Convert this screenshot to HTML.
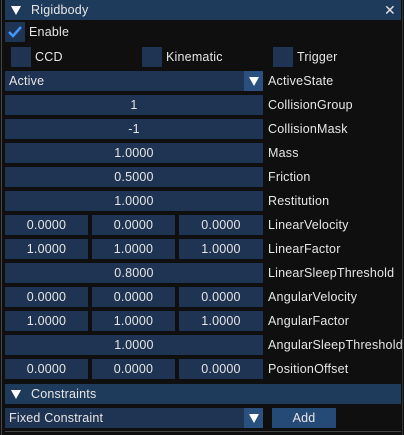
<!DOCTYPE html><html><head><style>
body{margin:0;width:404px;height:435px;background:#0f0f0f;position:relative;overflow:hidden;font-family:"Liberation Sans",sans-serif;font-size:12.5px;letter-spacing:0.2px;color:#e6e6e6}
div{position:absolute;box-sizing:border-box}
.f{background:#1f3352;height:20px;line-height:20px;text-align:center}
.l{left:268px;height:20px;line-height:20px;white-space:nowrap}
.cb{background:#1f3352;width:20px;height:20px}
.t{height:20px;line-height:20px;white-space:nowrap}
.tri{width:0;height:0;border-left:5px solid transparent;border-right:5px solid transparent;border-top:9px solid #fff}
</style></head><body>
<div style="left:1px;top:0;width:1px;height:435px;background:#444"></div>
<div style="left:402px;top:0;width:1px;height:435px;background:#333"></div>
<div style="left:5px;top:0;width:396px;height:20px;background:#1f3b5c"></div>
<div class="tri" style="left:11px;top:6px"></div>
<div class="t" style="left:31px;top:0">Rigidbody</div>
<div class="t" style="left:384px;top:0;font-size:14px">✕</div>
<div class="cb" style="left:5px;top:22px"><svg width="20" height="20"><path d="M4 10 L8 14 L16 5" stroke="#4296fa" stroke-width="2.5" fill="none"/></svg></div>
<div class="t" style="left:29px;top:22px">Enable</div>
<div class="cb" style="left:11px;top:47px"></div><div class="t" style="left:35px;top:47px">CCD</div>
<div class="cb" style="left:142px;top:47px"></div><div class="t" style="left:166px;top:47px">Kinematic</div>
<div class="cb" style="left:273px;top:47px"></div><div class="t" style="left:297px;top:47px">Trigger</div>
<div class="f" style="left:5px;top:71px;width:258px;text-align:left;padding-left:4px">Active</div>
<div style="left:244px;top:71px;width:19px;height:20px;background:#2a5080"></div>
<div class="tri" style="left:249px;top:77px"></div>
<div class="l" style="top:71px">ActiveState</div>
<div class="f" style="left:5px;top:95px;width:258px">1</div><div class="l" style="top:95px">CollisionGroup</div>
<div class="f" style="left:5px;top:119px;width:258px">-1</div><div class="l" style="top:119px">CollisionMask</div>
<div class="f" style="left:5px;top:143px;width:258px">1.0000</div><div class="l" style="top:143px">Mass</div>
<div class="f" style="left:5px;top:167px;width:258px">0.5000</div><div class="l" style="top:167px">Friction</div>
<div class="f" style="left:5px;top:191px;width:258px">1.0000</div><div class="l" style="top:191px">Restitution</div>
<div class="f" style="left:5px;top:215px;width:83px">0.0000</div><div class="f" style="left:92px;top:215px;width:83px">0.0000</div><div class="f" style="left:179px;top:215px;width:84px">0.0000</div><div class="l" style="top:215px">LinearVelocity</div>
<div class="f" style="left:5px;top:239px;width:83px">1.0000</div><div class="f" style="left:92px;top:239px;width:83px">1.0000</div><div class="f" style="left:179px;top:239px;width:84px">1.0000</div><div class="l" style="top:239px">LinearFactor</div>
<div class="f" style="left:5px;top:263px;width:258px">0.8000</div><div class="l" style="top:263px">LinearSleepThreshold</div>
<div class="f" style="left:5px;top:287px;width:83px">0.0000</div><div class="f" style="left:92px;top:287px;width:83px">0.0000</div><div class="f" style="left:179px;top:287px;width:84px">0.0000</div><div class="l" style="top:287px">AngularVelocity</div>
<div class="f" style="left:5px;top:311px;width:83px">1.0000</div><div class="f" style="left:92px;top:311px;width:83px">1.0000</div><div class="f" style="left:179px;top:311px;width:84px">1.0000</div><div class="l" style="top:311px">AngularFactor</div>
<div class="f" style="left:5px;top:335px;width:258px">1.0000</div><div class="l" style="top:335px">AngularSleepThreshold</div>
<div class="f" style="left:5px;top:359px;width:83px">0.0000</div><div class="f" style="left:92px;top:359px;width:83px">0.0000</div><div class="f" style="left:179px;top:359px;width:84px">0.0000</div><div class="l" style="top:359px">PositionOffset</div>
<div style="left:5px;top:384px;width:396px;height:20px;background:#1f3b5c"></div>
<div class="tri" style="left:11px;top:390px"></div>
<div class="t" style="left:31px;top:384px">Constraints</div>
<div class="f" style="left:5px;top:408px;width:258px;text-align:left;padding-left:4px">Fixed Constraint</div>
<div style="left:244px;top:408px;width:19px;height:20px;background:#2a5080"></div>
<div class="tri" style="left:249px;top:414px"></div>
<div class="f" style="left:272px;top:408px;width:64px;background:#254a76">Add</div>
<div style="left:5px;top:431px;width:396px;height:1px;background:#444"></div>
</body></html>
